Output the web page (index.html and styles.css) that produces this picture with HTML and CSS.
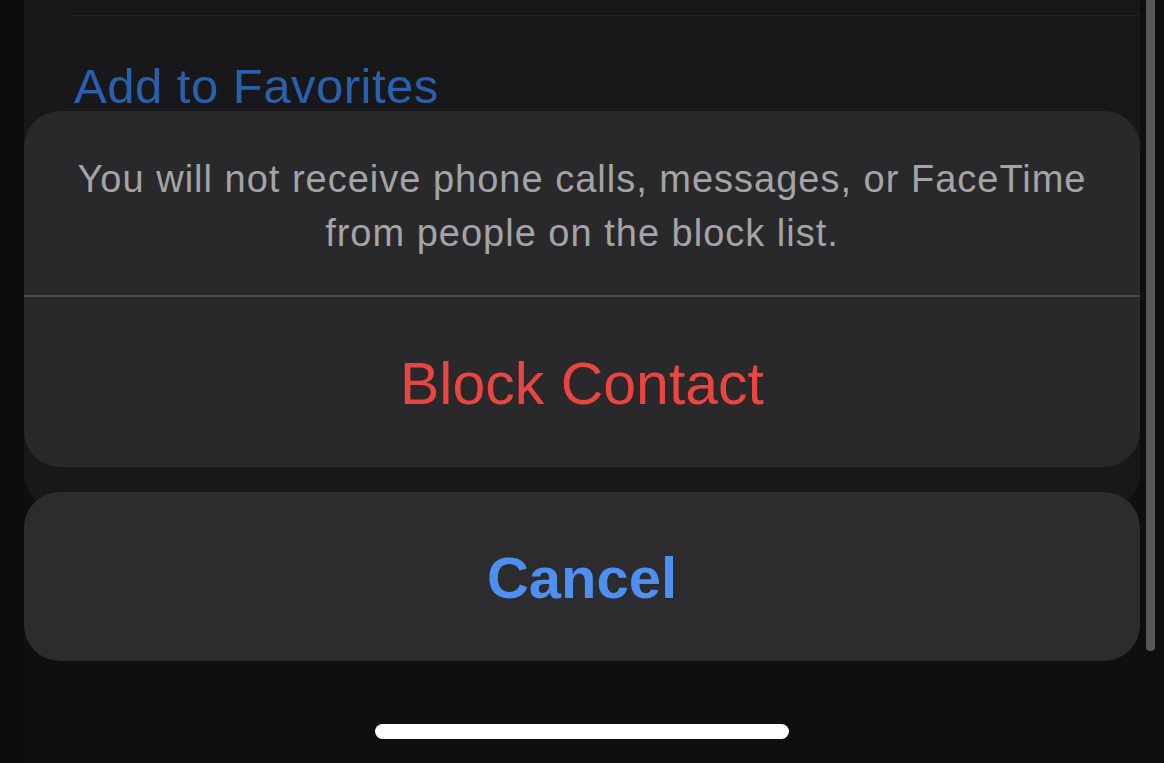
FILE: index.html
```html
<!DOCTYPE html>
<html lang="en">
<head>
<meta charset="utf-8">
<title>Block Contact</title>
<link rel="stylesheet" href="styles.css">
</head>
<body>
<div class="screen">
  <div class="gutter"></div>
  <div class="content">
    <div class="bg-card">
      <div class="bg-sep"></div>
      <div class="bg-row">Add to Favorites</div>
    </div>
  </div>
  <div class="rail"><div class="rail-bar"></div></div>

  <div class="sheet-layer">
    <div class="sheet">
      <p class="message">You will not receive phone calls, messages, or FaceTime<br>from people on the block list.</p>
      <div class="action destructive">Block Contact</div>
    </div>
    <div class="sheet cancel">
      <div class="action cancel-label">Cancel</div>
    </div>
    <div class="home-row"><div class="home-indicator"></div></div>
  </div>
</div>
</body>
</html>
```

FILE: styles.css
```css
html, body {
  margin: 0;
  padding: 0;
  background: #0f0f11;
}
.screen {
  position: relative;
  width: 1164px;
  height: 763px;
  overflow: hidden;
  display: flex;
  font-family: "Liberation Sans", Arial, sans-serif;
}
.gutter {
  width: 24px;
  flex: none;
  background: #0d0d0f;
}
.content {
  width: 1116px;
  flex: none;
}
.bg-card {
  height: 510px;
  background: #18181a;
  border-radius: 0 0 36px 36px;
  padding-top: 15px;
  box-sizing: border-box;
}
.bg-sep {
  height: 1px;
  background: #212123;
  margin-left: 46px;
}
.bg-row {
  margin-left: 50px;
  margin-top: 42px;
  font-size: 49px;
  line-height: 56px;
  color: #2960ad;
  letter-spacing: 0.5px;
}
.rail {
  width: 24px;
  flex: none;
  display: flex;
  padding-left: 6px;
  box-sizing: border-box;
}
.rail-bar {
  width: 9px;
  height: 651px;
  background: #57575a;
  border-radius: 0 0 4px 4px;
}
.sheet-layer {
  position: absolute;
  left: 24px;
  top: 111px;
  width: 1116px;
  display: flex;
  flex-direction: column;
}
.sheet {
  background: #29292b;
  border-radius: 36px;
  overflow: hidden;
}
.message {
  margin: 0;
  padding: 41px 10px 35px;
  text-align: center;
  font-size: 38px;
  line-height: 54px;
  color: #a4a4a6;
  letter-spacing: 1px;
  border-bottom: 2px solid #4a4a4c;
}
.action {
  text-align: center;
}
.destructive {
  height: 170px;
  line-height: 174px;
  font-size: 59px;
  color: #ea4540;
}
.sheet.cancel {
  margin-top: 25px;
  height: 169px;
  background: #2c2c2e;
}
.cancel-label {
  line-height: 171px;
  font-size: 58px;
  font-weight: bold;
  color: #4e8ff2;
}
.home-row {
  display: flex;
  justify-content: center;
  margin-top: 63px;
}
.home-indicator {
  width: 414px;
  height: 15px;
  background: #ffffff;
  border-radius: 8px;
}
```
